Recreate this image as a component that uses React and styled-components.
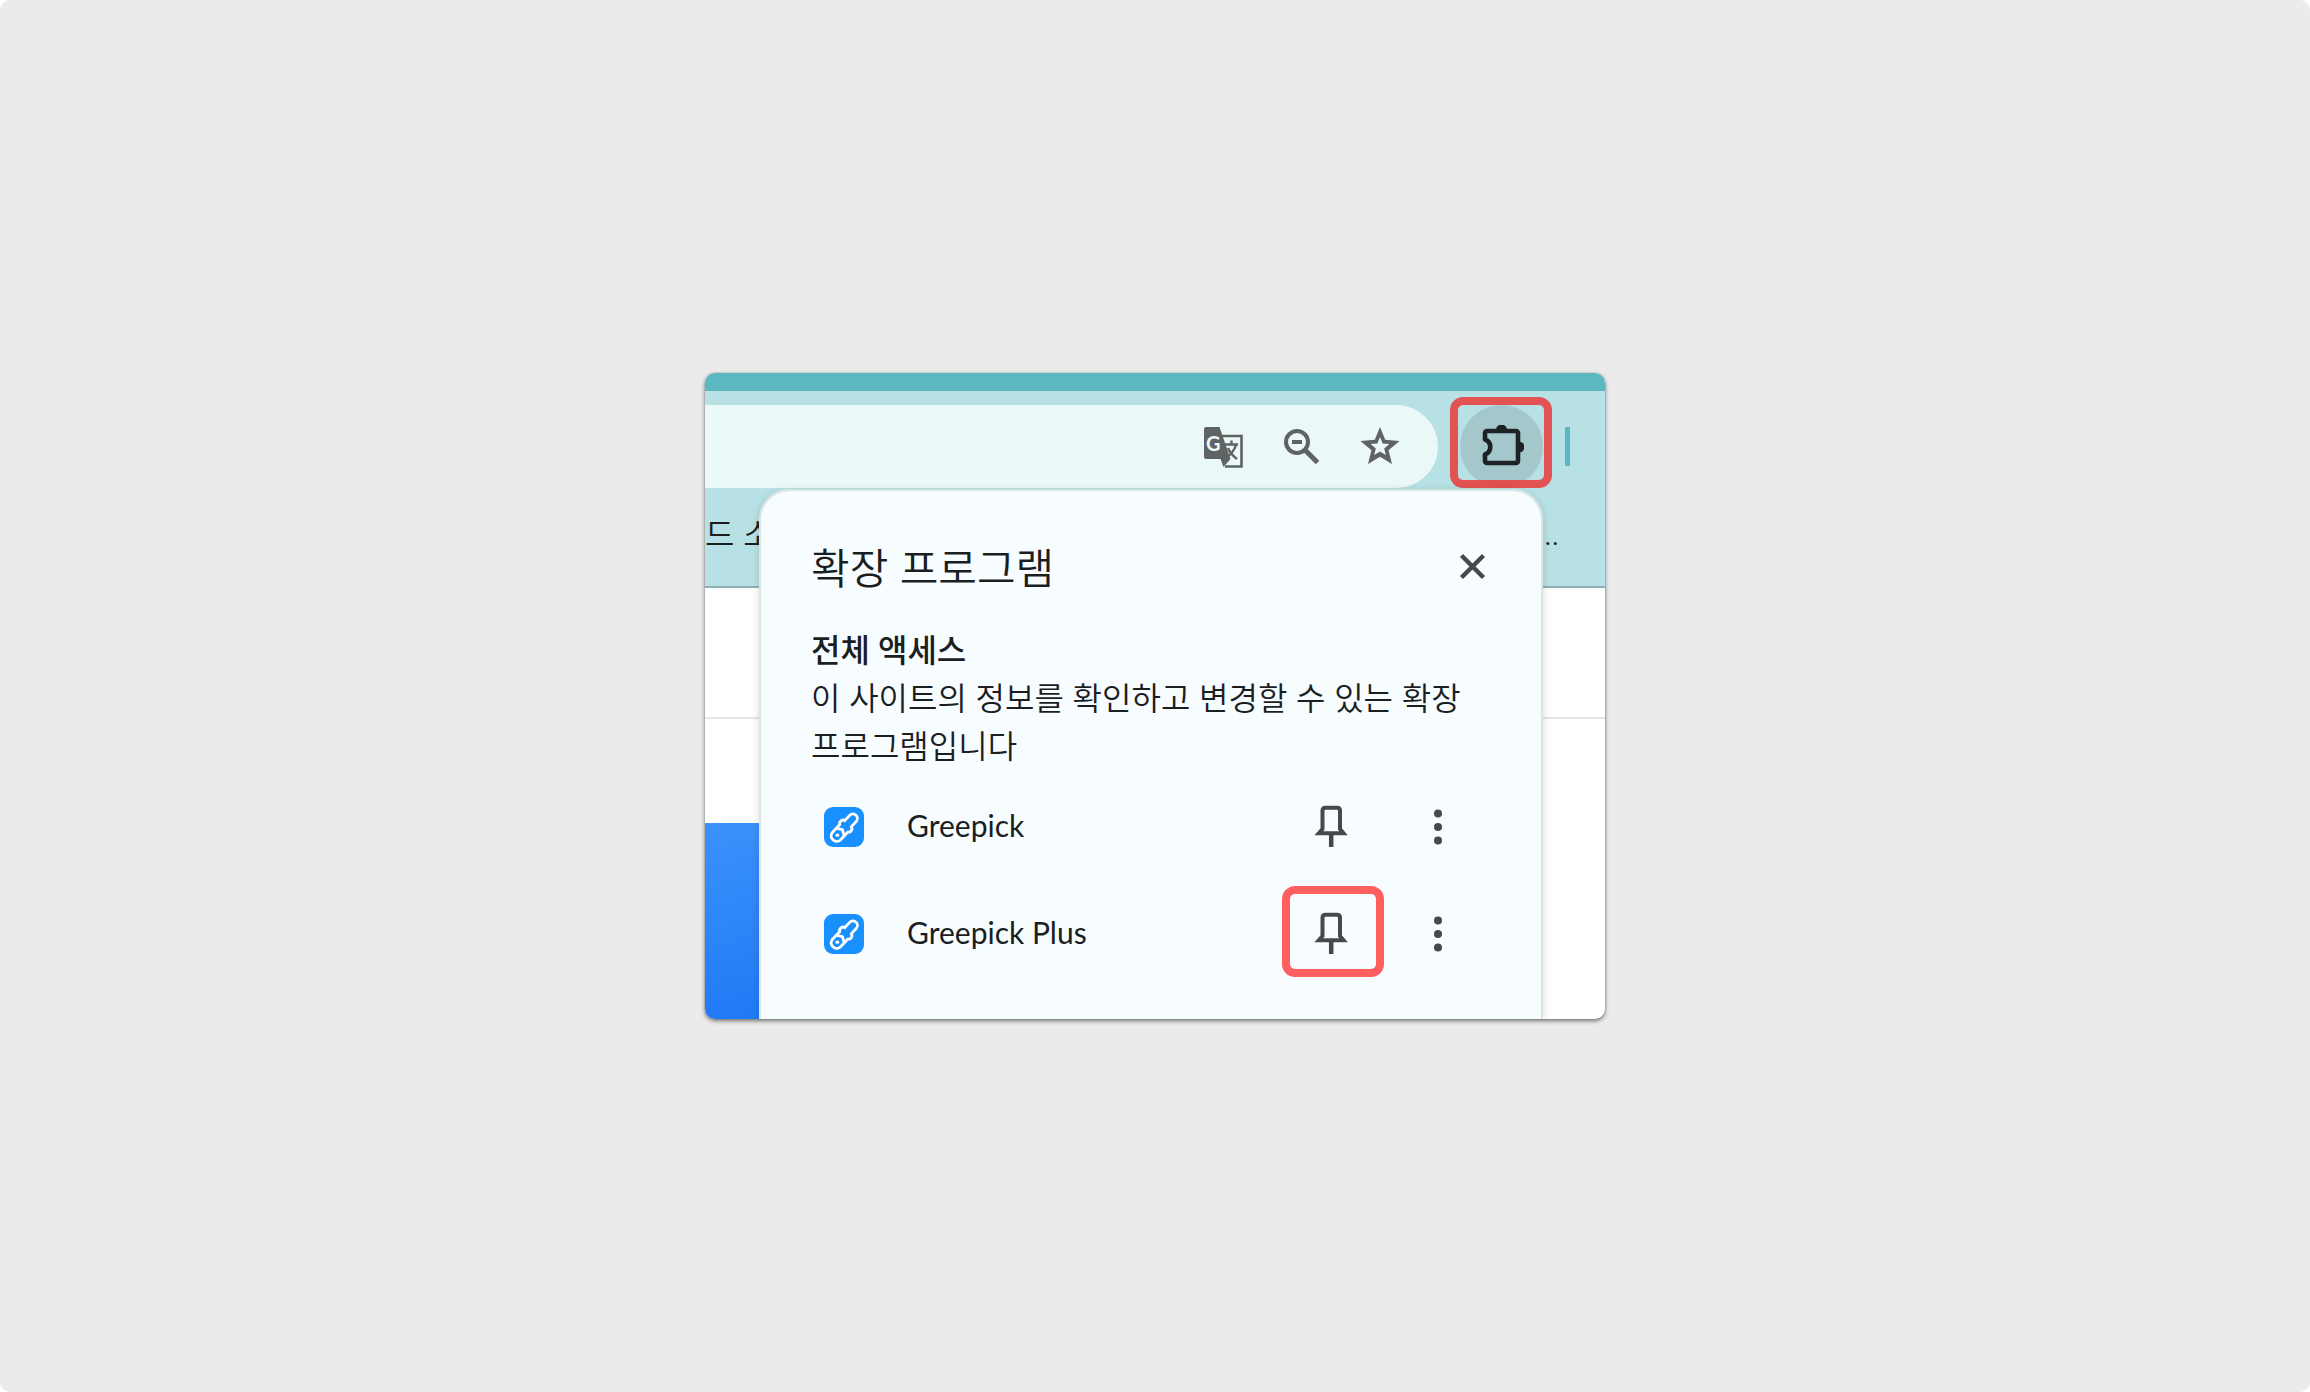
import React from 'react';
import styled, { createGlobalStyle, css } from 'styled-components';

const GlobalStyle = createGlobalStyle`
  * {
    box-sizing: border-box;
  }

  body {
    margin: 0;
    background: #ffffff;
    color: #1b1e1f;
    font-family: Lato, "Noto Sans CJK KR", sans-serif;
  }

  button {
    margin: 0;
    padding: 0;
    border: 0;
    background: none;
    color: inherit;
    font: inherit;
    cursor: pointer;
  }

  svg {
    display: block;
  }
`;

const Backdrop = styled.main`
  min-height: 100vh;
  display: flex;
  align-items: center;
  justify-content: center;
  background: #ebebeb;
  border-radius: 10px;
`;

/* The browser and the popup share one grid cell, so the popup sets the height */
const Window = styled.div`
  display: grid;
  width: 100%;
  max-width: 900px;
  border-radius: 10px;
  overflow: hidden;
  background: #ffffff;
  box-shadow: 0 2px 4px rgba(0, 0, 0, 0.5), 0 0 2px rgba(0, 0, 0, 0.2);

  > * {
    grid-area: 1 / 1;
    min-width: 0;
  }
`;

const Browser = styled.div`
  display: flex;
  flex-direction: column;
`;

const TabStrip = styled.div`
  height: 18px;
  background: #5bb8c1;
`;

const Toolbar = styled.div`
  display: flex;
  align-items: center;
  gap: 22px;
  padding: 14px 35px 0 0;
  background: #b7e1e4;
`;

const Omnibox = styled.div`
  flex: 1;
  display: flex;
  align-items: center;
  justify-content: flex-end;
  gap: 34px;
  height: 83px;
  padding-right: 36px;
  border-radius: 0 42px 42px 0;
  background: #ebf8f8;
  color: #5f6364;
`;

const ToolButton = styled.button`
  width: 44px;
  height: 44px;
`;

const highlight = css`
  border: 8px solid ${({ $ring }) => $ring || 'transparent'};
  border-radius: 13px;
`;

const ExtensionsButton = styled.button`
  position: relative;
  display: grid;
  place-items: center;
  width: 83px;
  height: 83px;
  border-radius: 50%;
  background: #a4c7cc;
  color: #1f2224;
`;

const ExtensionsRing = styled.span`
  ${highlight}
  position: absolute;
  top: -8px;
  left: -10px;
  width: 102px;
  height: 91px;
`;

const ToolbarDivider = styled.span`
  width: 5px;
  height: 39px;
  background: #5bb8c1;
`;

const BookmarksBar = styled.div`
  display: flex;
  align-items: center;
  justify-content: space-between;
  height: 100px;
  padding: 0 46px 10px 0;
  border-bottom: 2px solid #8fb0b4;
  background: #b7e1e4;
  font-size: 32px;
  font-weight: 350;
`;

const SiteHeader = styled.div`
  height: 131px;
  border-bottom: 2px solid #e6e6e6;
`;

const SiteHero = styled.div`
  flex: 1;
  width: 10%;
  margin-top: 104px;
  background: linear-gradient(170deg, #3b92fb, #2079f5);
`;

const Popup = styled.section`
  margin: 116px 62px 0 54px;
  padding: 53px 0 32px;
  border: 2px solid #dbe5e6;
  border-bottom: 0;
  border-radius: 30px 30px 0 0;
  background: #f7fcff;
  background-clip: padding-box;
  box-shadow: 0 2px 8px rgba(0, 0, 0, 0.14);
  z-index: 1;
`;

const PopupHeader = styled.header`
  display: flex;
  align-items: center;
  justify-content: space-between;
  height: 48px;
  padding: 0 47px 0 50px;
`;

const Title = styled.h1`
  margin: 0;
  font-size: 42px;
  font-weight: 350;
  line-height: 48px;
`;

const CloseButton = styled.button`
  width: 44px;
  height: 44px;
  color: #45494b;
`;

const Access = styled.div`
  margin-top: 34px;
  padding: 0 50px;
  font-size: 32px;
  line-height: 48px;
`;

const AccessTitle = styled.h2`
  margin: 0;
  font-size: inherit;
  font-weight: 500;
`;

const AccessText = styled.p`
  margin: 0;
  font-weight: 350;
`;

const List = styled.ul`
  margin: 3px 0 0;
  padding: 0;
  list-style: none;
`;

const Row = styled.li`
  display: flex;
  align-items: center;
  height: 107px;
  padding: 0 71px 0 63px;
  color: #45494b;
`;

const Name = styled.span`
  flex: 1;
  margin-left: 43px;
  padding-bottom: 4px;
  color: #1b1e1f;
  font-size: 30px;
`;

const PinButton = styled.button`
  ${highlight}
  display: grid;
  place-items: center;
  width: 102px;
  height: 91px;
  margin-bottom: 4px;
  padding: 2px 4px 0 0;
`;

const MenuButton = styled.button`
  display: grid;
  place-items: center;
  width: 64px;
  height: 64px;
  margin-left: 22px;
`;

const TranslateIcon = () => (
  <svg width="44" height="44" viewBox="0 0 44 44" aria-hidden="true">
    <path d="M19 11H39.5V41.5H23" fill="none" stroke="currentColor" strokeWidth="2.6" />
    <path d="M4 2H17.5L28.5 34L21.5 42L18.5 34H4a2 2 0 0 1-2-2V4a2 2 0 0 1 2-2Z" fill="currentColor" />
    <text x="4" y="26" fill="#ebf8f8" fontFamily="Lato, sans-serif" fontSize="20" fontWeight="700">G</text>
    <path d="M23 19.5H36M29.5 15.5V19.5M34 20C32.5 25 29 29 25 32M26 23C28 28 31 31 35 34" fill="none" stroke="currentColor" strokeWidth="2.4" />
  </svg>
);

const ZoomOutIcon = () => (
  <svg width="44" height="44" viewBox="0 0 44 44" fill="none" stroke="currentColor" aria-hidden="true">
    <circle cx="17" cy="17" r="11" strokeWidth="4" />
    <path d="M12 17H22" strokeWidth="4" />
    <path d="M24.5 24.5L37.5 37.5" strokeWidth="5" />
  </svg>
);

const StarIcon = () => (
  <svg width="44" height="44" viewBox="0 0 44 44" aria-hidden="true">
    <path
      fill="currentColor"
      fillRule="evenodd"
      d="M22 2L27.2 14.8L41.5 16L30.6 25.2L34 39L22 31.8L10 39L13.4 25.2L2.5 16L16.8 14.8ZM22 12L19.4 18.4L12.6 19L17.8 23.4L16.2 30L22 26.5L27.8 30L26.2 23.4L31.4 19L24.6 18.4Z"
    />
  </svg>
);

const PuzzleIcon = () => (
  <svg width="44" height="44" viewBox="0 0 44 44" aria-hidden="true">
    <path
      d="M7 6H36a2 2 0 0 1 2 2V36a2 2 0 0 1-2 2H7a2 2 0 0 1-2-2V29.5C12 27 12 17 5 14.5V8a2 2 0 0 1 2-2Z"
      fill="none"
      stroke="currentColor"
      strokeWidth="4.6"
      strokeLinejoin="round"
    />
    <path d="M16 5a5.5 5.5 0 0 1 11 0ZM39 16.5a5.5 5.5 0 0 1 0 11Z" fill="currentColor" />
  </svg>
);

const CloseIcon = () => (
  <svg width="44" height="44" viewBox="0 0 44 44" fill="none" stroke="currentColor" strokeWidth="4.5" aria-hidden="true">
    <path d="M11.5 9.5L33.5 31.5M33.5 9.5L11.5 31.5" />
  </svg>
);

const PinIcon = () => (
  <svg width="40" height="44" viewBox="0 0 40 44" fill="none" stroke="currentColor" aria-hidden="true">
    <path d="M11.5 25V6.5Q11.5 3.8 14.5 3.8H26Q29 3.8 29 6.5V25L32.5 29.2H7.8Z" strokeWidth="4" />
    <path d="M20.2 29V43" strokeWidth="4.5" />
  </svg>
);

const MoreIcon = () => (
  <svg width="12" height="40" viewBox="0 0 12 40" fill="currentColor" aria-hidden="true">
    <circle cx="6" cy="6.5" r="4" />
    <circle cx="6" cy="20" r="4" />
    <circle cx="6" cy="33.5" r="4" />
  </svg>
);

const GreepickLogo = () => (
  <svg width="40" height="40" viewBox="0 0 40 40" aria-hidden="true">
    <rect width="40" height="40" rx="9" fill="#1990ff" />
    <g transform="translate(20.5 20.5) rotate(43)" fill="none" stroke="#ffffff" strokeWidth="2.8" strokeLinejoin="round">
      <path d="M-4.5 -5V-12C-4.5 -18.5 4.5 -18.5 4.5 -12V-5C7.5 -5 8 0 5.5 1V12C5 18.5 -5 18.5 -5.5 12V1C-8 0 -7.5 -5 -4.5 -5Z" />
      <path d="M-5 6L0 3L5 6M-1 12L1 9" />
    </g>
  </svg>
);

const extensions = [
  { name: 'Greepick' },
  { name: 'Greepick Plus', ring: '#ff5f5f' },
];

const App = () => {
  return (
    <>
      <GlobalStyle />
      <Backdrop>
        <Window>
          <Browser>
            <TabStrip />
            <Toolbar>
              <Omnibox>
                <ToolButton aria-label="번역"><TranslateIcon /></ToolButton>
                <ToolButton aria-label="축소"><ZoomOutIcon /></ToolButton>
                <ToolButton aria-label="북마크"><StarIcon /></ToolButton>
              </Omnibox>
              <ExtensionsButton aria-label="확장 프로그램">
                <PuzzleIcon />
                <ExtensionsRing $ring="rgba(236, 58, 58, 0.85)" />
              </ExtensionsButton>
              <ToolbarDivider />
            </Toolbar>
            <BookmarksBar>
              <span>드 소</span>
              <span>..</span>
            </BookmarksBar>
            <SiteHeader />
            <SiteHero />
          </Browser>

          <Popup>
            <PopupHeader>
              <Title>확장 프로그램</Title>
              <CloseButton aria-label="닫기"><CloseIcon /></CloseButton>
            </PopupHeader>
            <Access>
              <AccessTitle>전체 액세스</AccessTitle>
              <AccessText>이 사이트의 정보를 확인하고 변경할 수 있는 확장 프로그램입니다</AccessText>
            </Access>
            <List>
              {extensions.map(({ name, ring }) => (
                <Row key={name}>
                  <GreepickLogo />
                  <Name>{name}</Name>
                  <PinButton $ring={ring} aria-label={`${name} 고정`}><PinIcon /></PinButton>
                  <MenuButton aria-label={`${name} 메뉴`}><MoreIcon /></MenuButton>
                </Row>
              ))}
            </List>
          </Popup>
        </Window>
      </Backdrop>
    </>
  );
}

export default App;
